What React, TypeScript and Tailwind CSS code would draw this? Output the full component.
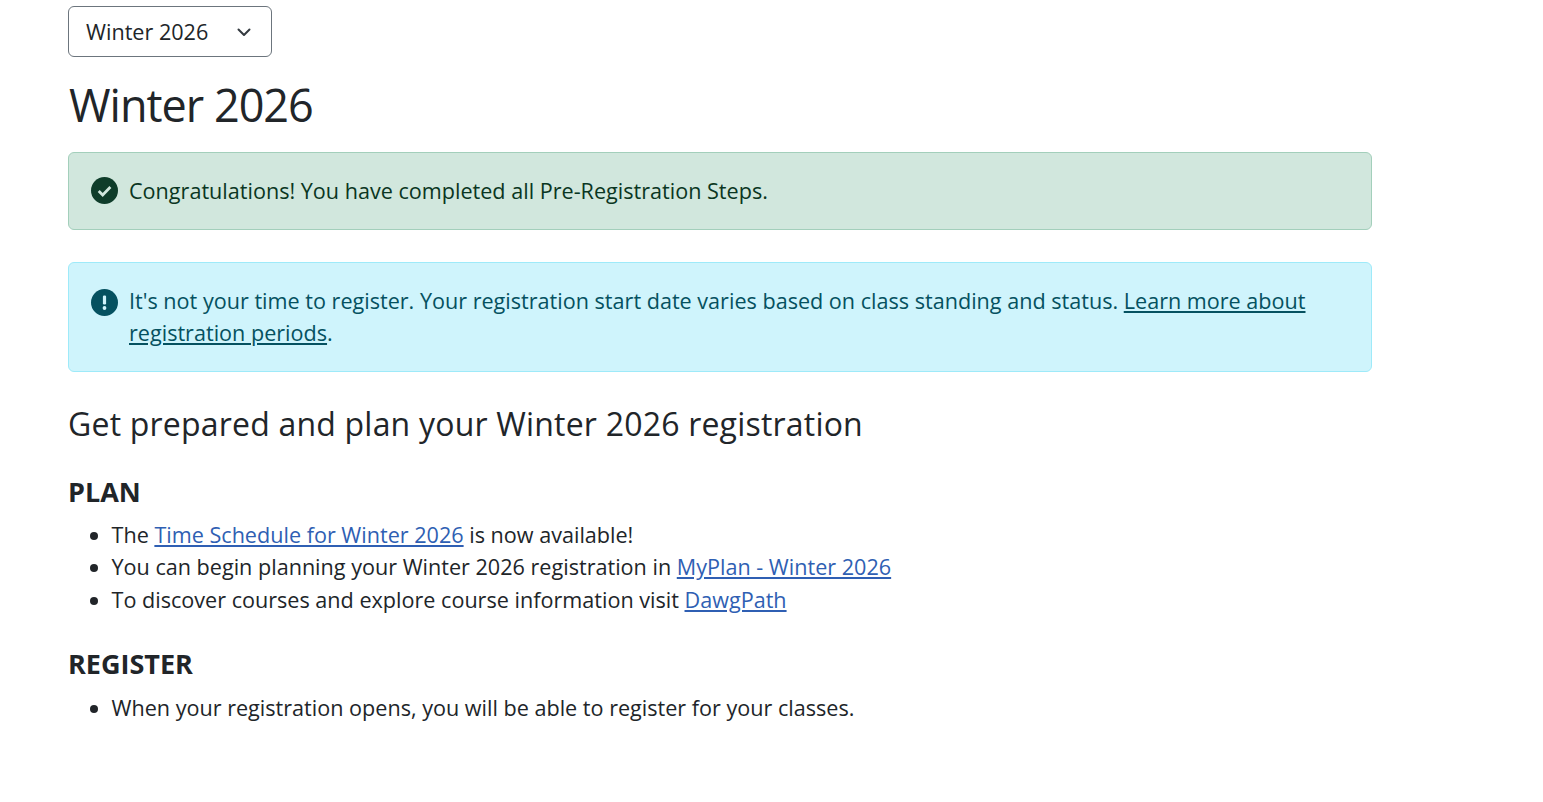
const font = "font-['Open_Sans',sans-serif]";

function CheckIcon() {
  return (
    <svg width="27" height="27" viewBox="0 0 27 27" className="shrink-0 -mt-[1px]">
      <circle cx="13.5" cy="13.5" r="13.5" fill="#0f3d2a" />
      <path d="M7.7 13.9l4 4 7.7-7.8" fill="none" stroke="#d1e7dd" strokeWidth="2.8" />
    </svg>
  );
}

function AlertIcon() {
  return (
    <svg width="27" height="27" viewBox="0 0 27 27" className="shrink-0">
      <circle cx="13.5" cy="13.5" r="13.5" fill="#055160" />
      <rect x="11.9" y="6.5" width="3.2" height="9" rx="1.2" fill="#cff4fc" />
      <circle cx="13.5" cy="19" r="1.9" fill="#cff4fc" />
    </svg>
  );
}

export default function App() {
  return (
    <div className={`${font} min-h-screen bg-white pl-[68px] pr-[171px] pt-[6px] text-[#212529] text-[21.6px] leading-[32.4px]`}>
      <div className="flex items-center justify-between w-[204px] h-[51px] border border-[#6c757d] rounded-[6px] pl-[17px] pr-[19px]">
        <span className="mt-[1px]">Winter 2026</span>
        <svg width="16" height="16" viewBox="0 0 16 16" fill="none" stroke="#343a40" strokeWidth="2" strokeLinecap="round" strokeLinejoin="round">
          <path d="M2.5 5.5L8 11l5.5-5.5" />
        </svg>
      </div>

      <h1 className="text-[45px] leading-[54px] mt-[21px] font-medium pl-px tracking-[-1px]">Winter 2026</h1>

      <div className="mt-[20px] flex items-center gap-[11px] h-[78px] bg-[#d1e7dd] border border-[#a3cfbb] rounded-[6px] px-[22px] text-[#0a3622]">
        <CheckIcon />
        <span>Congratulations! You have completed all Pre-Registration Steps.</span>
      </div>

      <div className="mt-[32px] flex items-start gap-[11px] bg-[#cff4fc] border border-[#9eeaf9] rounded-[6px] px-[22px] pt-[22px] pb-[21px] text-[#055160]">
        <div className="pt-[4px]"><AlertIcon /></div>
        <p>
          It's not your time to register. Your registration start date varies based on class standing and status.{" "}
          <a href="#" className="underline">Learn more about registration periods</a>.
        </p>
      </div>

      <h2 className="text-[32px] leading-[38px] mt-[33px] tracking-[0.2px]">Get prepared and plan your Winter 2026 registration</h2>

      <h3 className="text-[27px] leading-[32px] font-bold mt-[33px]">PLAN</h3>
      <ul className="list-disc pl-[43.5px] mt-[11px]">
        <li>The <a href="#" className="underline text-[#2f5fb3]">Time Schedule for Winter 2026</a> is now available!</li>
        <li>You can begin planning your Winter 2026 registration in <a href="#" className="underline text-[#2f5fb3]">MyPlan - Winter 2026</a></li>
        <li>To discover courses and explore course information visit <a href="#" className="underline text-[#2f5fb3]">DawgPath</a></li>
      </ul>

      <h3 className="text-[27px] leading-[32px] font-bold mt-[32px]">REGISTER</h3>
      <ul className="list-disc pl-[43.5px] mt-[12px]">
        <li>When your registration opens, you will be able to register for your classes.</li>
      </ul>
    </div>
  );
}
